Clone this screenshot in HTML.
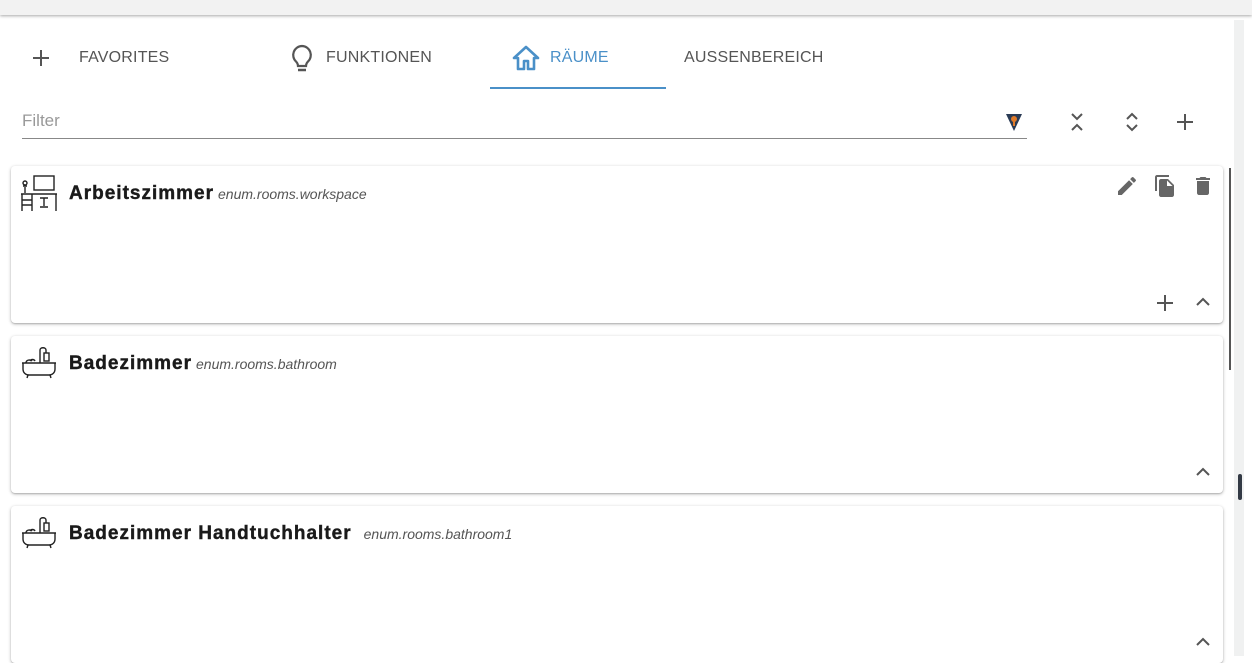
<!DOCTYPE html>
<html><head><meta charset="utf-8"><style>
*{box-sizing:border-box;margin:0;padding:0}
body{width:1252px;height:656px;overflow:hidden;background:#fff;font-family:"Liberation Sans",Arial,sans-serif;position:relative}
.top{position:absolute;left:0;top:0;width:1252px;height:15px;background:#f2f2f2;box-shadow:0 1px 3px rgba(0,0,0,.35)}
.tab{position:absolute;top:49px;font-size:16px;color:#555;letter-spacing:.2px}
.ind{position:absolute;left:490px;top:87px;width:176px;height:2px;background:#4a90c8}
.filter{position:absolute;left:22px;top:111px;font-size:17px;color:#999}
.fline{position:absolute;left:22px;top:138px;width:1005px;height:1px;background:#888}
.card{position:absolute;left:11px;width:1212px;height:157px;background:#fff;border-radius:4px;box-shadow:0 1px 3px rgba(0,0,0,.3),0 1px 1px rgba(0,0,0,.1)}
.title{position:absolute;left:58px;top:17px;font-size:19px;font-weight:bold;color:#1a1a1a;letter-spacing:1px;-webkit-text-stroke:.4px #1a1a1a}
.sub{font-size:14px;font-style:italic;font-weight:normal;color:#555;letter-spacing:0;margin-left:4px;-webkit-text-stroke:0}
svg{position:absolute}
.track{position:absolute;left:1234px;top:20px;width:10px;height:636px;background:#f0f1f1}
</style></head><body>
<div class="top"></div>
<div class="track"></div>
<div style="position:absolute;left:1229px;top:168px;width:2px;height:202px;background:#555"></div>
<div style="position:absolute;left:1238px;top:474px;width:4px;height:26px;background:#333a45;border-radius:2px"></div>

<svg style="left:31px;top:48px" width="20" height="20" viewBox="0 0 20 20"><path d="M10 2v16M2 10h16" stroke="#555" stroke-width="2"/></svg>
<div class="tab" style="left:79px">FAVORITES</div>
<svg style="left:288px;top:43px" width="28" height="32" viewBox="0 0 28 32"><path d="M14 3a9 9 0 0 0-6 15.5c1.5 1.5 2 3 2 4.5h8c0-1.5.5-3 2-4.5A9 9 0 0 0 14 3z" fill="none" stroke="#555" stroke-width="2.2"/><path d="M10 27h8" stroke="#555" stroke-width="2.5"/></svg>
<div class="tab" style="left:326px">FUNKTIONEN</div>
<svg style="left:511px;top:44px" width="30" height="28" viewBox="0 0 30 28"><path d="M15 3L3 14h4v11h6v-8h4v8h6V14h4z" fill="none" stroke="#4a90c8" stroke-width="2.6" stroke-linejoin="round"/></svg>
<div class="tab" style="left:550px;color:#4a90c8">RÄUME</div>
<div class="tab" style="left:684px">AUSSENBEREICH</div>
<div class="ind"></div>

<div class="filter">Filter</div>
<div class="fline"></div>
<svg style="left:1005px;top:112px" width="18" height="20" viewBox="0 0 18 20"><path d="M1 2h16L9 19z" fill="#2a3b55"/><circle cx="9" cy="7" r="3" fill="#e07b2a"/><path d="M9 9v5" stroke="#e07b2a" stroke-width="2"/></svg>
<svg style="left:1067px;top:111px" width="20" height="22" viewBox="0 0 20 22"><path d="M5 3l5 5 5-5M5 19l5-5 5 5" fill="none" stroke="#555" stroke-width="2"/></svg>
<svg style="left:1122px;top:111px" width="20" height="22" viewBox="0 0 20 22"><path d="M5 8l5-5 5 5M5 14l5 5 5-5" fill="none" stroke="#555" stroke-width="2"/></svg>
<svg style="left:1175px;top:112px" width="20" height="20" viewBox="0 0 20 20"><path d="M10 2v16M2 10h16" stroke="#555" stroke-width="2"/></svg>

<div class="card" style="top:166px">
<svg style="left:9px;top:8px" width="38" height="38" viewBox="0 0 38 38" fill="none" stroke="#222" stroke-width="1.4"><rect x="14" y="2" width="20" height="14"/><path d="M1 20h36M2 20v17M36 20v17M2 26h10M2 31h10M12 20v17M20 24h8M24 24v8M20 33h8"/><path d="M5 19v-6M3 12h4"/><circle cx="5" cy="9" r="2"/></svg>
<div class="title">Arbeitszimmer<span class="sub">enum.rooms.workspace</span></div>
<svg style="left:1104px;top:8px" width="24" height="24" viewBox="0 0 24 24"><path d="M3 17.25V21h3.750L17.8 9.94l-3.75-3.75L3 17.25zM20.7 7.04a1 1 0 0 0 0-1.41l-2.34-2.34a1 1 0 0 0-1.41 0l-1.830 1.83 3.75 3.75 1.83-1.83z" fill="#666"/></svg>
<svg style="left:1142px;top:7px" width="24" height="26" viewBox="0 0 24 24"><path d="M16 1H4c-1.1 0-2 .9-2 2v14h2V3h12V1zm-1 4l6 6v10c0 1.1-.9 2-2 2H8c-1.1 0-2-.9-2-2V7c0-1.1.9-2 2-2h7zm-1 7h5.5L14 6.5V12z" fill="#666"/></svg>
<svg style="left:1180px;top:8px" width="24" height="24" viewBox="0 0 24 24"><path d="M6 19c0 1.1.9 2 2 2h8c1.1 0 2-.9 2-2V7H6v12zM19 4h-3.5l-1-1h-5l-1 1H5v2h14V4z" fill="#666"/></svg>
<svg style="left:1144px;top:127px" width="20" height="20" viewBox="0 0 20 20"><path d="M10 2v16M2 10h16" stroke="#555" stroke-width="2"/></svg>
<svg style="left:1183px;top:129px" width="18" height="14" viewBox="0 0 18 14"><path d="M3 10l6-6 6 6" fill="none" stroke="#555" stroke-width="2"/></svg>
</div>

<div class="card" style="top:336px">
<svg style="left:9px;top:9px" width="38" height="34" viewBox="0 0 38 34" fill="none" stroke="#222" stroke-width="1.4"><path d="M2 18h34M3 18v6c0 4 3 6 6 6h20c3 0 6-2 6-6v-6M8 30l-1 3M30 30l1 3"/><path d="M6 18c0-3 4-4 6-2M10 16c1-2 4-2 5 0"/><path d="M20 18V5c0-3 6-3 6 0v3"/><rect x="24" y="8" width="5" height="8"/></svg>
<div class="title">Badezimmer<span class="sub">enum.rooms.bathroom</span></div>
<svg style="left:1183px;top:129px" width="18" height="14" viewBox="0 0 18 14"><path d="M3 10l6-6 6 6" fill="none" stroke="#555" stroke-width="2"/></svg>
</div>

<div class="card" style="top:506px">
<svg style="left:9px;top:9px" width="38" height="34" viewBox="0 0 38 34" fill="none" stroke="#222" stroke-width="1.4"><path d="M2 18h34M3 18v6c0 4 3 6 6 6h20c3 0 6-2 6-6v-6M8 30l-1 3M30 30l1 3"/><path d="M6 18c0-3 4-4 6-2M10 16c1-2 4-2 5 0"/><path d="M20 18V5c0-3 6-3 6 0v3"/><rect x="24" y="8" width="5" height="8"/></svg>
<div class="title">Badezimmer Handtuchhalter<span class="sub" style="margin-left:12px">enum.rooms.bathroom1</span></div>
<svg style="left:1183px;top:129px" width="18" height="14" viewBox="0 0 18 14"><path d="M3 10l6-6 6 6" fill="none" stroke="#555" stroke-width="2"/></svg>
</div>
</body></html>
